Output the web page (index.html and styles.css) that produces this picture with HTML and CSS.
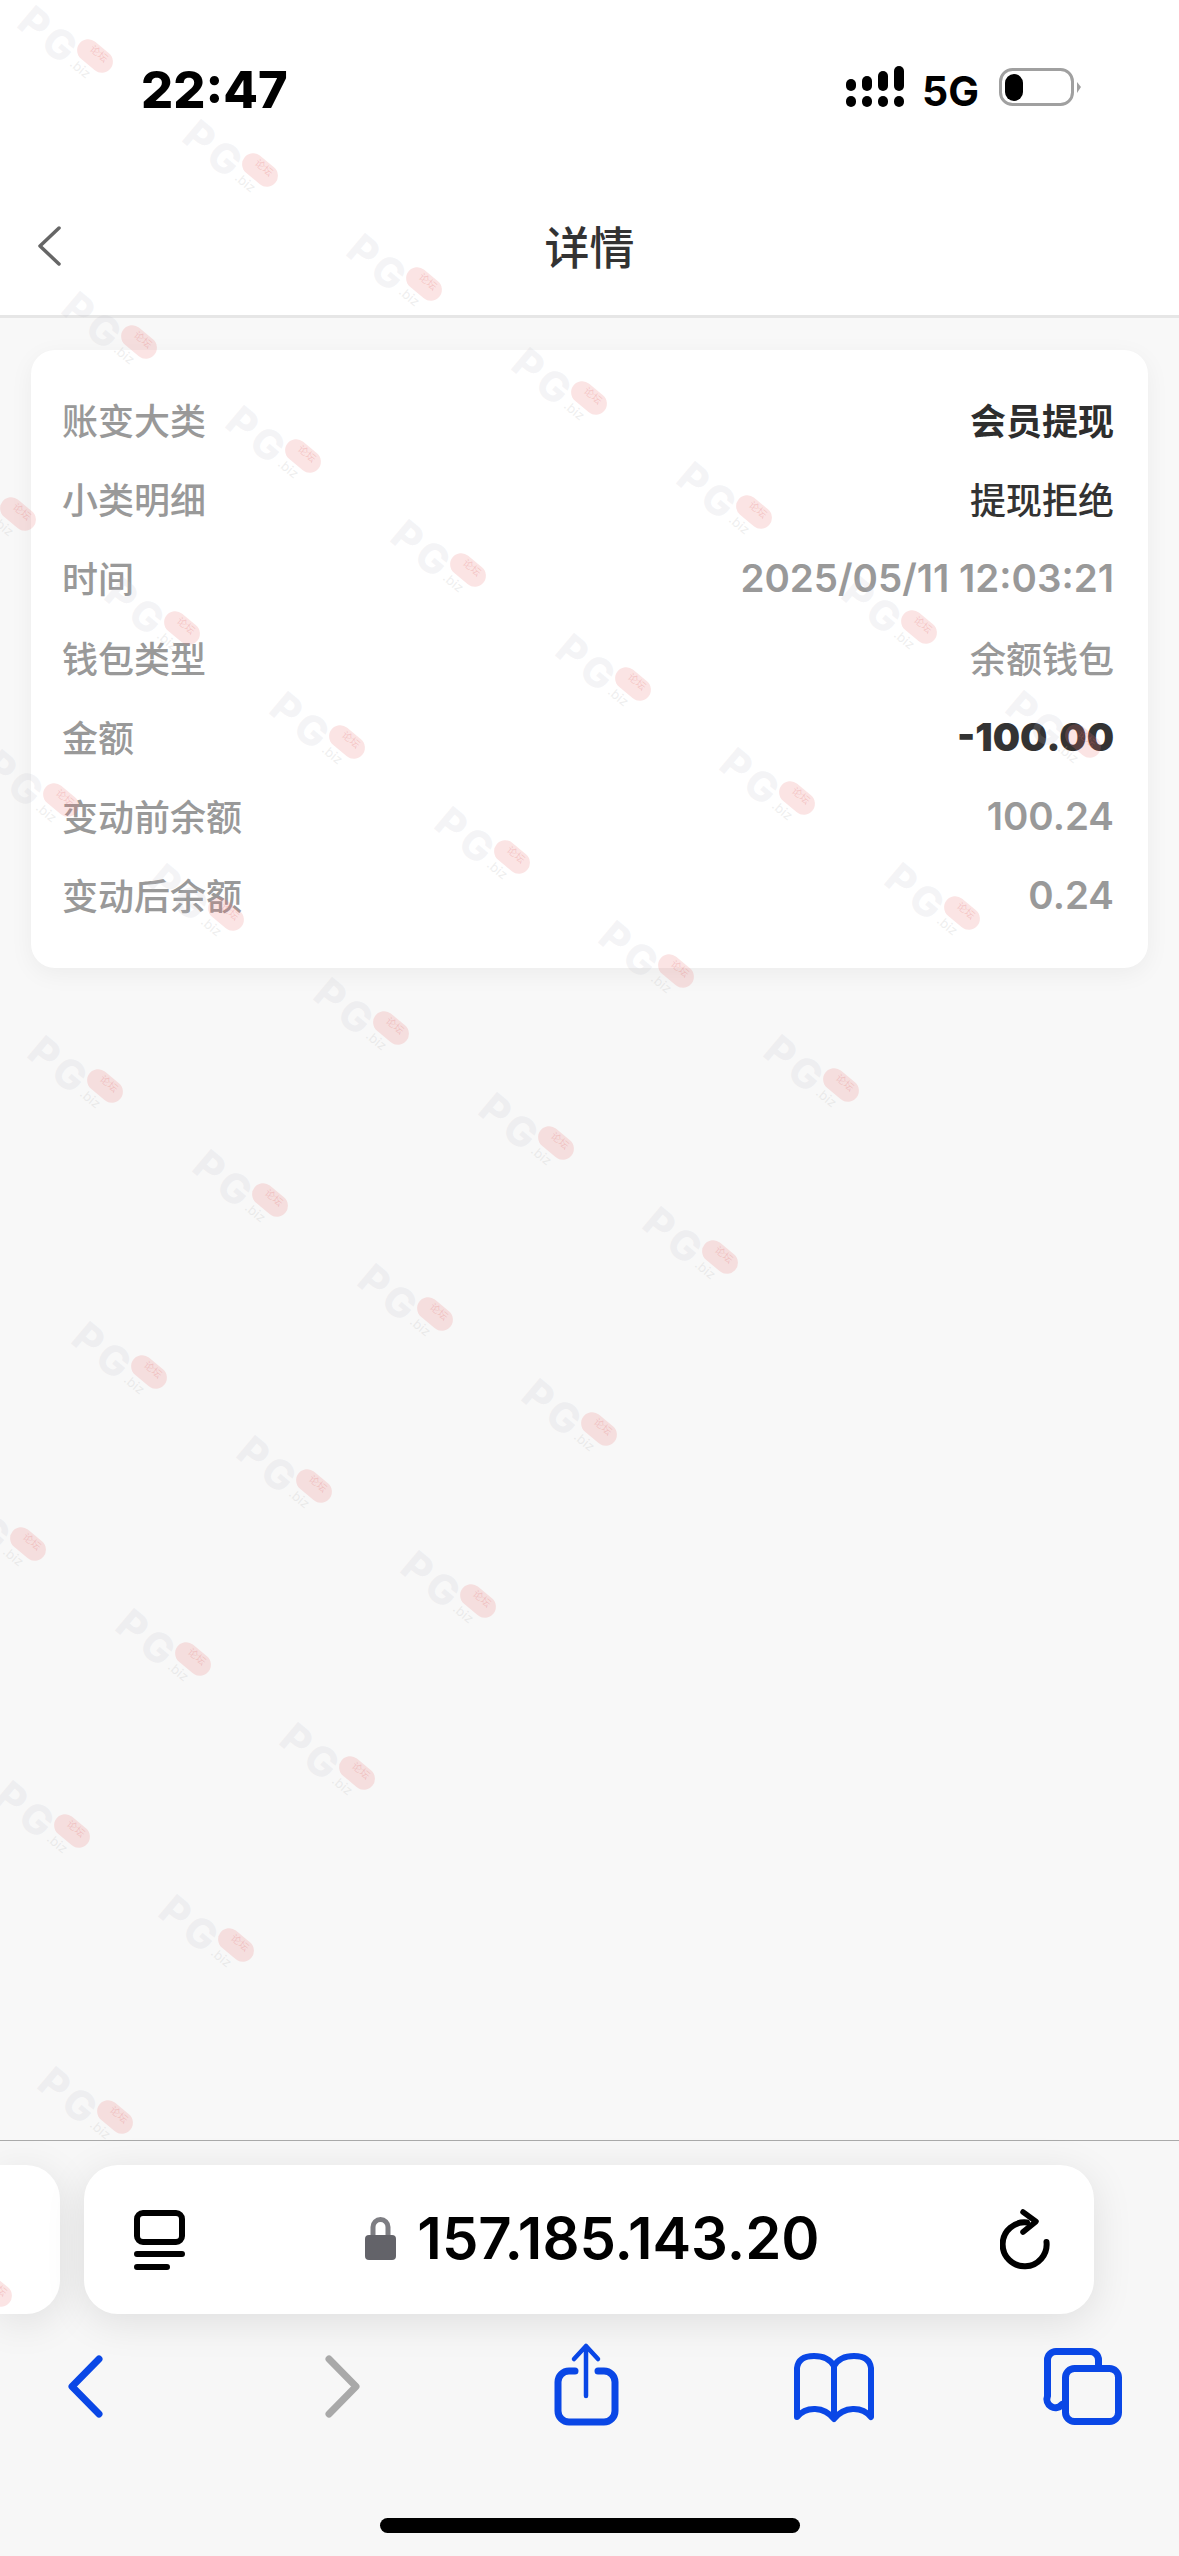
FILE: index.html
```html
<!DOCTYPE html>
<html lang="zh-CN">
<head>
    <meta charset="UTF-8">
    <meta name="viewport" content="width=device-width, initial-scale=1.0">
    <title>详情</title>
    <link rel="stylesheet" href="styles.css">
</head>
<body>
    <header class="top">
        <div class="status-bar">
            <span class="clock">22:47</span>
            <div class="status-right">
                <svg class="signal" width="58" height="41" viewBox="0 0 58 41">
                    <rect x="0" y="13" width="10" height="12" rx="5"/>
                    <rect x="16" y="10" width="10" height="15" rx="5"/>
                    <rect x="32" y="5" width="10" height="20" rx="5"/>
                    <rect x="48" y="0" width="10" height="25" rx="5"/>
                    <rect x="0" y="30" width="10" height="11" rx="5"/>
                    <rect x="16" y="30" width="10" height="11" rx="5"/>
                    <rect x="32" y="30" width="10" height="11" rx="5"/>
                    <rect x="48" y="30" width="10" height="11" rx="5"/>
                </svg>
                <span class="network">5G</span>
                <svg class="battery" width="82" height="38" viewBox="0 0 82 38">
                    <rect x="1.5" y="1.5" width="72" height="35" rx="12" fill="none" stroke="#a0a0a0" stroke-width="3"/>
                    <rect x="6" y="6" width="18" height="27" rx="9" fill="#000"/>
                    <path d="M78 14 L82 19 L78 25 Z" fill="#a0a0a0"/>
                </svg>
            </div>
        </div>
        <nav class="nav">
            <svg class="nav-back" width="24" height="40" viewBox="0 0 24 40">
                <path d="M22 2 L3 20 L22 38" fill="none" stroke="#666" stroke-width="3.5" stroke-linecap="round" stroke-linejoin="round"/>
            </svg>
            <h1 class="nav-title">详情</h1>
        </nav>
    </header>

    <main class="content">
        <section class="card">
            <div class="row"><span class="label">账变大类</span><span class="value strong">会员提现</span></div>
            <div class="row"><span class="label">小类明细</span><span class="value medium">提现拒绝</span></div>
            <div class="row"><span class="label">时间</span><span class="value number">2025/05/11 12:03:21</span></div>
            <div class="row"><span class="label">钱包类型</span><span class="value">余额钱包</span></div>
            <div class="row"><span class="label">金额</span><span class="value number heavy">-100.00</span></div>
            <div class="row"><span class="label">变动前余额</span><span class="value number">100.24</span></div>
            <div class="row"><span class="label">变动后余额</span><span class="value number">0.24</span></div>
        </section>
    </main>

    <footer class="toolbar">
        <div class="tabs-row">
            <div class="prev-tab">
                <svg class="prev-mark" width="60" height="149" viewBox="0 0 60 149"><use href="#wm" x="-82" y="74"/></svg>
            </div>
            <div class="url-bar">
                <svg width="51" height="60" viewBox="0 0 51 60">
                    <rect x="3" y="3" width="45" height="29" rx="6" fill="none" stroke="#000" stroke-width="6"/>
                    <path d="M3 44 H48 M3 57 H33" fill="none" stroke="#000" stroke-width="6" stroke-linecap="round"/>
                </svg>
                <div class="address">
                    <svg width="31" height="44" viewBox="0 0 31 44">
                        <path d="M8 21 V11 a7.5 7.5 0 0 1 15 0 V21" fill="none" stroke="#7d7d82" stroke-width="5"/>
                        <rect x="0" y="19" width="31" height="25" rx="4" fill="#636369"/>
                    </svg>
                    <span class="url">157.185.143.20</span>
                </div>
                <svg width="50" height="61" viewBox="0 0 50 61">
                    <path d="M46.5 33 A22 22 0 1 1 27 13.5" fill="none" stroke="#000" stroke-width="6" stroke-linecap="round"/>
                    <path d="M23 3 L36 12.5 L23 23" fill="none" stroke="#000" stroke-width="5.5" stroke-linecap="round" stroke-linejoin="round"/>
                </svg>
            </div>
        </div>
        <div class="actions">
            <svg class="icon" viewBox="0 0 96 96"><path d="M62 21 L35 48.5 L62 76"/></svg>
            <svg class="icon off" viewBox="0 0 96 96"><path d="M34 21 L61 48.5 L34 76"/></svg>
            <svg class="icon" viewBox="0 0 96 96">
                <path d="M37 33 H31 A11 11 0 0 0 20 44 V73 A11 11 0 0 0 31 84 H66 A11 11 0 0 0 77 73 V44 A11 11 0 0 0 66 33 H60"/>
                <path class="thin" d="M48 58 V8 M36 21 L48 8 L60 21"/>
            </svg>
            <svg class="icon" viewBox="0 0 96 96">
                <path class="mid" d="M48 28 V78 M48 28 C44 21 37 18 28 18 C18 18 12 22 11 30 V79 C20 68 38 68 48 81 C58 68 76 68 85 79 V30 C84 22 78 18 68 18 C59 18 52 21 48 28"/>
            </svg>
            <svg class="icon" viewBox="0 0 96 96">
                <rect x="30.5" y="30.5" width="53" height="53" rx="9"/>
                <path d="M63.5 27 V22 A8.5 8.5 0 0 0 55 13.5 H21 A8.5 8.5 0 0 0 12.5 22 V58 A8.5 8.5 0 0 0 27 66.5"/>
            </svg>
        </div>
        <div class="home-bar"></div>
    </footer>

    <!-- forum watermark, each mark sits on the rotated tile lattice -->
    <svg class="watermark" width="1179" height="2140" viewBox="0 0 1179 2140">
        <defs>
            <g id="wm">
                <text class="wm-letters" transform="translate(-4 21) rotate(40)">PG</text>
                <rect class="wm-pill" x="-20" y="-11" width="40" height="22" rx="11" transform="translate(76 51) rotate(40)"/>
                <text class="wm-pill-text" transform="translate(70 45) rotate(40)">论坛</text>
                <text class="wm-biz" transform="translate(50 60) rotate(40)">.biz</text>
            </g>
        </defs>
        <use href="#wm" x="19" y="5"/><use href="#wm" x="184" y="119"/><use href="#wm" x="348" y="233"/><use href="#wm" x="513" y="347"/><use href="#wm" x="678" y="461"/><use href="#wm" x="843" y="576"/><use href="#wm" x="1007" y="690"/>
        <use href="#wm" x="63" y="291"/><use href="#wm" x="227" y="405"/><use href="#wm" x="392" y="519"/><use href="#wm" x="557" y="633"/><use href="#wm" x="721" y="747"/><use href="#wm" x="886" y="862"/>
        <use href="#wm" x="-58" y="463"/><use href="#wm" x="106" y="577"/><use href="#wm" x="271" y="691"/><use href="#wm" x="436" y="806"/><use href="#wm" x="600" y="920"/><use href="#wm" x="765" y="1034"/>
        <use href="#wm" x="-15" y="749"/><use href="#wm" x="150" y="863"/><use href="#wm" x="315" y="977"/><use href="#wm" x="480" y="1092"/><use href="#wm" x="644" y="1206"/>
        <use href="#wm" x="29" y="1035"/><use href="#wm" x="194" y="1149"/><use href="#wm" x="359" y="1263"/><use href="#wm" x="523" y="1378"/>
        <use href="#wm" x="73" y="1321"/><use href="#wm" x="238" y="1435"/><use href="#wm" x="402" y="1550"/>
        <use href="#wm" x="-48" y="1493"/><use href="#wm" x="117" y="1608"/><use href="#wm" x="281" y="1722"/>
        <use href="#wm" x="-4" y="1780"/><use href="#wm" x="160" y="1894"/>
        <use href="#wm" x="39" y="2066"/>
    </svg>
</body>
</html>
```

FILE: styles.css
```css
* {
    box-sizing: border-box;
}
html, body {
    margin: 0;
    padding: 0;
}
body {
    position: relative;
    display: flex;
    flex-direction: column;
    width: 1179px;
    height: 2556px;
    overflow: hidden;
    background-color: #f8f8f8;
    font-family: Inter, "Noto Sans CJK SC", sans-serif;
}
.top {
    background-color: #fff;
    border-bottom: 3px solid #e6e6e6;
}
.status-bar {
    display: flex;
    justify-content: space-between;
    height: 178px;
    padding: 66px 98px 0 141px;
}
.clock {
    margin-top: 3px;
    font-size: 50.5px;
    font-weight: 800;
    line-height: 42px;
    color: #000;
}
.status-right {
    display: flex;
    align-items: flex-start;
    gap: 20px;
    height: 42px;
}
.signal {
    flex: none;
    margin-right: -2px;
}
.network {
    font-size: 41px;
    font-weight: 700;
    line-height: 40px;
    margin-top: 5px;
    color: #000;
}
.battery {
    margin-top: 2px;
}
.nav {
    position: relative;
    display: flex;
    align-items: center;
    justify-content: center;
    height: 137px;
}
.nav-back {
    position: absolute;
    left: 37px;
    top: 48px;
}
.nav-title {
    margin: 0 0 3px;
    font-size: 45px;
    font-weight: 500;
    color: #333;
}
.content {
    flex: 1;
    padding: 32px 31px 0;
}
.card {
    padding: 29px 34px 34px 31px;
    background-color: #fff;
    border-radius: 24px;
    box-shadow: 0 6px 24px rgba(0, 0, 0, 0.05);
}
.row {
    display: flex;
    align-items: center;
    justify-content: space-between;
    height: 79.3px;
    font-size: 36px;
    color: #999;
}
.label {
    font-weight: 500;
}
.value {
    font-weight: 500;
}
.value.number {
    padding-top: 2px;
    font-size: 38.5px;
    font-weight: 600;
}
.value.strong {
    font-weight: 700;
    color: #2e2e2e;
}
.value.medium {
    color: #333;
}
.value.heavy {
    font-weight: 900;
    color: #333;
}
.toolbar {
    position: relative;
    height: 416px;
    padding-top: 24px;
    background-color: #f7f7f7;
    border-top: 1.5px solid #aaa;
}
.tabs-row {
    display: flex;
    gap: 24px;
    height: 149px;
}
.prev-tab {
    width: 60px;
    overflow: hidden;
    background-color: #fff;
    border-radius: 0 34px 34px 0;
    box-shadow: 0 8px 40px rgba(0, 0, 0, 0.1);
}
.prev-mark {
    display: block;
}
.url-bar {
    display: flex;
    align-items: center;
    justify-content: space-between;
    width: 1010px;
    padding: 0 44px 0 50px;
    background-color: #fff;
    border-radius: 34px;
    box-shadow: 0 8px 40px rgba(0, 0, 0, 0.1);
}
.address {
    display: flex;
    align-items: center;
    gap: 21px;
    padding-bottom: 4px;
}
.url {
    font-size: 58px;
    font-weight: 600;
    line-height: 60px;
    color: #000;
}
.actions {
    display: grid;
    grid-template-columns: 258px 243px 248px 249px 96px;
    margin-top: 24px;
    padding-left: 37px;
}
.icon {
    display: block;
    width: 96px;
    height: 96px;
    fill: none;
    stroke: #0a47e6;
    stroke-width: 7;
    stroke-linecap: round;
    stroke-linejoin: round;
}
.icon.off {
    stroke: #a9a9a9;
}
.icon .thin {
    stroke-width: 4.5;
}
.icon .mid {
    stroke-width: 6;
}
.home-bar {
    width: 420px;
    height: 15px;
    margin: 84px auto 0;
    background-color: #000;
    border-radius: 8px;
}
.watermark {
    position: absolute;
    left: 0;
    top: 0;
    pointer-events: none;
}
.wm-letters {
    font-size: 41px;
    font-weight: 800;
    letter-spacing: 4px;
    fill: rgba(190, 190, 200, 0.16);
}
.wm-pill {
    fill: rgba(235, 120, 120, 0.2);
}
.wm-pill-text {
    font-size: 10px;
    fill: rgba(225, 110, 110, 0.25);
}
.wm-biz {
    font-size: 13px;
    fill: rgba(190, 190, 190, 0.25);
}
```
